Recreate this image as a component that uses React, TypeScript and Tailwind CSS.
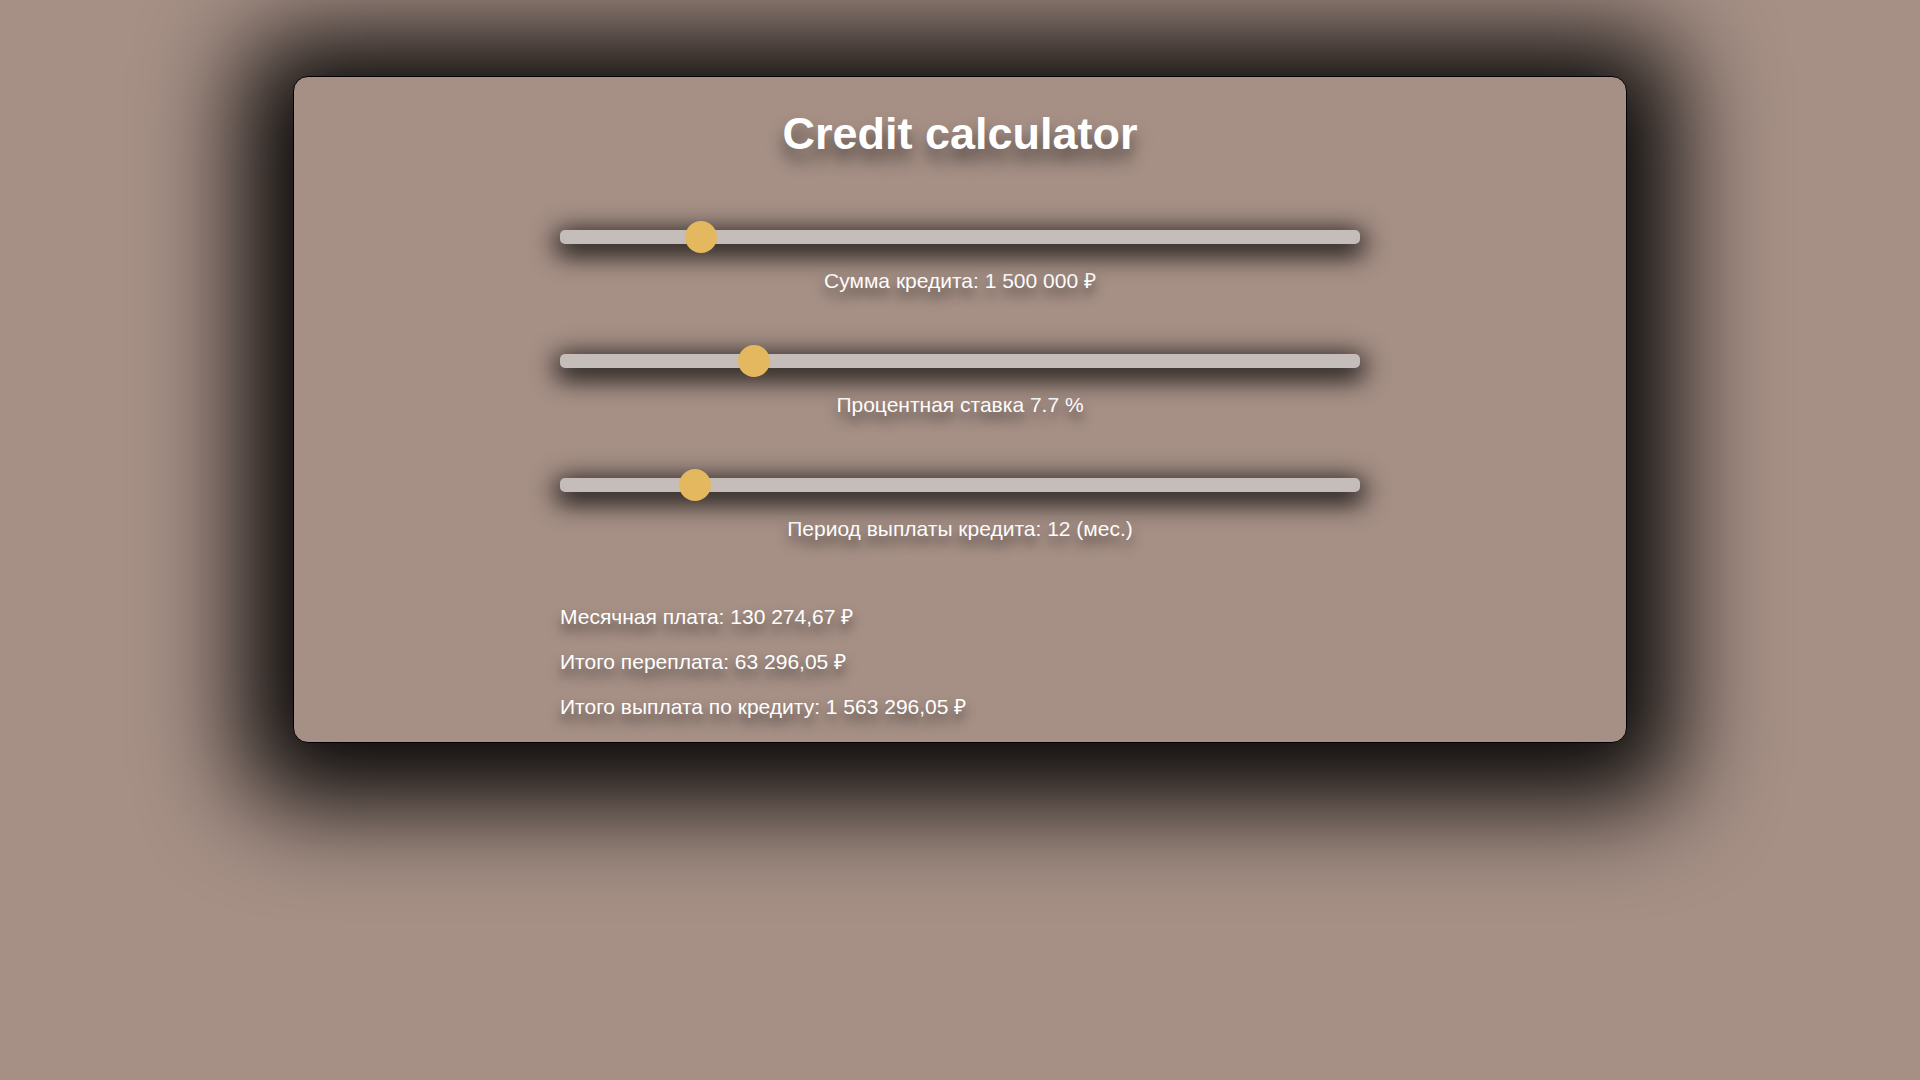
import React from "react";

const sliders = [
  { pos: 0.1628, label: "Сумма кредита: 1 500 000 ₽" },
  { pos: 0.2314, label: "Процентная ставка 7.7 %" },
  { pos: 0.155, label: "Период выплаты кредита: 12 (мес.)" },
];

function Slider({ pos, label, first }: { pos: number; label: string; first?: boolean }) {
  return (
    <div className={first ? "flex flex-col items-center" : "mt-[61px] flex flex-col items-center"}>
      <div className="relative h-[14px] w-[800px] rounded-[5px] bg-[#c5bdba] shadow-[0_6px_26px_5px_rgba(0,0,0,0.9)]">
        <div
          className="absolute top-[-9px] h-[32px] w-[32px] rounded-full bg-[#e3b85e]"
          style={{ left: `${pos * 768}px` }}
        />
      </div>
      <div className="mt-[25px] h-[24px] text-[21px] leading-[24px] text-white [text-shadow:0_8px_12px_rgba(0,0,0,0.6)]">
        {label}
      </div>
    </div>
  );
}

export default function App() {
  return (
    <div className="min-h-[1080px] w-full overflow-hidden bg-[#a69086] pt-[76px] font-['Liberation_Sans',Arial,sans-serif]">
      <div className="mx-auto w-[1334px] rounded-[15px] border border-black bg-[#a69086] pb-[23px] pt-[32px] shadow-[0_10px_100px_50px_rgba(0,0,0,0.95)]">
        <h1 className="text-center text-[45px] font-bold leading-[50px] text-white [text-shadow:0_12px_16px_rgba(0,0,0,0.55)]">
          Credit calculator
        </h1>
        <div className="mt-[71px] flex flex-col items-center">
          {sliders.map((s, i) => (
            <Slider key={i} pos={s.pos} label={s.label} first={i === 0} />
          ))}
        </div>
        <div className="mx-auto mt-[64px] flex w-[800px] flex-col gap-[21px] text-[21px] leading-[24px] text-white [text-shadow:0_8px_12px_rgba(0,0,0,0.6)]">
          <div>Месячная плата: 130 274,67 ₽</div>
          <div>Итого переплата: 63 296,05 ₽</div>
          <div>Итого выплата по кредиту: 1 563 296,05 ₽</div>
        </div>
      </div>
    </div>
  );
}
